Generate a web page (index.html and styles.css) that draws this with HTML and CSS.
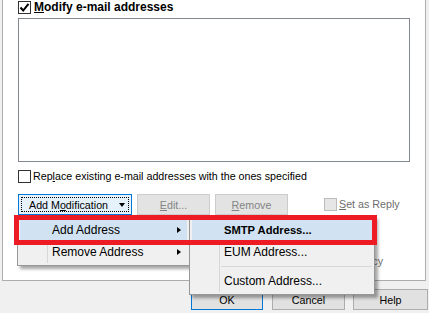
FILE: index.html
```html
<!DOCTYPE html>
<html>
<head>
<meta charset="utf-8">
<link rel="stylesheet" href="styles.css">
</head>
<body>
<div class="panel">
  <div class="row-top">
    <span class="cb checked"><svg width="11" height="11" viewBox="0 0 11 11"><path d="M1.5 5.5 L4.2 8.5 L9.5 1.8" fill="none" stroke="#000" stroke-width="2"/></svg></span>
    <span class="title"><u>M</u>odify e-mail addresses</span>
  </div>
  <div class="listbox"></div>
  <div class="row-cb">
    <span class="cb"></span>
    <span class="label">Rep<u>l</u>ace existing e-mail addresses with the ones specified</span>
  </div>
  <div class="btn-row">
    <div class="btn btn-add"><span class="focus">Add M<u>o</u>dification<span class="down"></span></span></div>
    <div class="btn btn-dis"><u>E</u>dit...</div>
    <div class="btn btn-dis"><u>R</u>emove</div>
    <div class="reply">
      <span class="cb cb-dis"></span>
      <span class="label dis"><u>S</u>et as Reply</span>
    </div>
  </div>
  <div class="policy-row">
    <span class="cb cb-dis"></span>
    <span class="label dis">Apply policy</span>
  </div>
</div>
<div class="dialog-buttons">
  <div class="btn btn-ok">OK</div>
  <div class="btn btn-cancel">Cancel</div>
  <div class="btn btn-help">Help</div>
</div>

<div class="menu menu1">
  <div class="item hot"><span class="gutter"></span><span class="text">Add Address</span><span class="arrow"></span></div>
  <div class="item"><span class="gutter"></span><span class="text">Remove Address</span><span class="arrow"></span></div>
</div>
<div class="menu menu2">
  <div class="item hot"><span class="gutter"></span><span class="text bold">SMTP Address...</span></div>
  <div class="item"><span class="gutter"></span><span class="text">EUM Address...</span></div>
  <div class="sep"><span class="gutter"></span><span class="line"></span></div>
  <div class="item"><span class="gutter"></span><span class="text">Custom Address...</span></div>
</div>
<div class="redbox"></div>
</body>
</html>
```

FILE: styles.css
```css
* { box-sizing: border-box; }
html, body { margin: 0; padding: 0; }
body {
  width: 429px;
  height: 313px;
  overflow: hidden;
  background: #f0f0f0;
  font-family: "Liberation Sans", Arial, sans-serif;
  font-size: 10.7px;
  color: #000;
  position: relative;
}
u { text-decoration: underline; text-underline-offset: 1px; }

.panel {
  margin-left: 2px;
  width: 424px;
  height: 281px;
  background: #fff;
  border: 1px solid #adadad;
  border-top: none;
  padding-left: 15px;
}
.row-top {
  height: 18px;
  display: flex;
  align-items: flex-start;
  padding-top: 1px;
}
.cb {
  width: 13px;
  height: 13px;
  border: 1px solid #333;
  background: #fff;
  flex: none;
  display: flex;
  align-items: center;
  justify-content: center;
}
.title {
  font-weight: bold;
  font-size: 12px;
  margin-left: 3px;
  line-height: 13px;
}
.listbox {
  width: 392px;
  height: 144px;
  border: 1px solid #828790;
  background: #fff;
}
.row-cb {
  margin-top: 8px;
  display: flex;
  align-items: center;
  height: 13px;
}
.label { margin-left: 2px; line-height: 13px; white-space: nowrap; }
.dis { color: #6d6d6d; }
.cb-dis { background: #e6e6e6; border-color: #bcbcbc; }

.btn-row {
  margin-top: 11px;
  display: flex;
  align-items: center;
  height: 21px;
}
.btn {
  height: 21px;
  width: 73px;
  border: 1px solid #adadad;
  background: #e1e1e1;
  display: flex;
  align-items: center;
  justify-content: center;
  flex: none;
}
.btn-add {
  width: 114px;
  margin-right: 5px;
  background: #e5f1fb;
  border-color: #0078d7;
  padding: 2px;
}
.focus {
  flex: 1;
  align-self: stretch;
  border: 1px dotted #000;
  display: flex;
  align-items: center;
  padding-left: 7px;
  white-space: nowrap;
}
.down {
  margin-left: auto;
  margin-right: 3px;
  width: 0;
  height: 0;
  border-left: 3.5px solid transparent;
  border-right: 3.5px solid transparent;
  border-top: 4px solid #000;
}
.btn-dis {
  background: #e3e3e3;
  border-color: #cccccc;
  color: #838383;
  margin-right: 5px;
}
.reply {
  display: flex;
  align-items: center;
  margin-left: 31px;
}
.policy-row {
  margin-top: 40px;
  display: flex;
  align-items: center;
  height: 13px;
  padding-left: 293px;
}

.dialog-buttons {
  margin-top: 8px;
  padding-left: 191px;
  display: flex;
}
.btn-ok { width: 72px; border-color: #0078d7; }
.btn-cancel { width: 73px; margin-left: 9px; }
.btn-help { width: 75px; margin-left: 8px; }

.menu {
  position: absolute;
  background: #f0f0f0;
  border: 1px solid #979797;
  padding: 2px;
  box-shadow: 3px 3px 3px rgba(0,0,0,0.35);
  font-size: 12px;
}
.menu1 { left: 17px; top: 216px; width: 173px; }
.menu2 { left: 189px; top: 216px; width: 186px; }
.item {
  height: 22px;
  display: flex;
  align-items: center;
  white-space: nowrap;
}
.item.hot { background: #d1e2f2; }
.gutter {
  width: 28px;
  align-self: stretch;
  border-right: 1px solid #d7d7d7;
  flex: none;
}
.item.hot .gutter { border-right-color: transparent; }
.text { padding-left: 4px; }
.bold { font-weight: bold; font-size: 11.2px; }
.arrow {
  margin-left: auto;
  margin-right: 6px;
  width: 0;
  height: 0;
  border-top: 3.5px solid transparent;
  border-bottom: 3.5px solid transparent;
  border-left: 4px solid #000;
}
.sep {
  height: 7px;
  display: flex;
  align-items: center;
}
.sep .line {
  flex: 1;
  height: 1px;
  background: #d7d7d7;
  margin-left: 1px;
}

.redbox {
  position: absolute;
  left: 14px;
  top: 215px;
  width: 363px;
  height: 30px;
  border: 5px solid #ed1c24;
}
```
